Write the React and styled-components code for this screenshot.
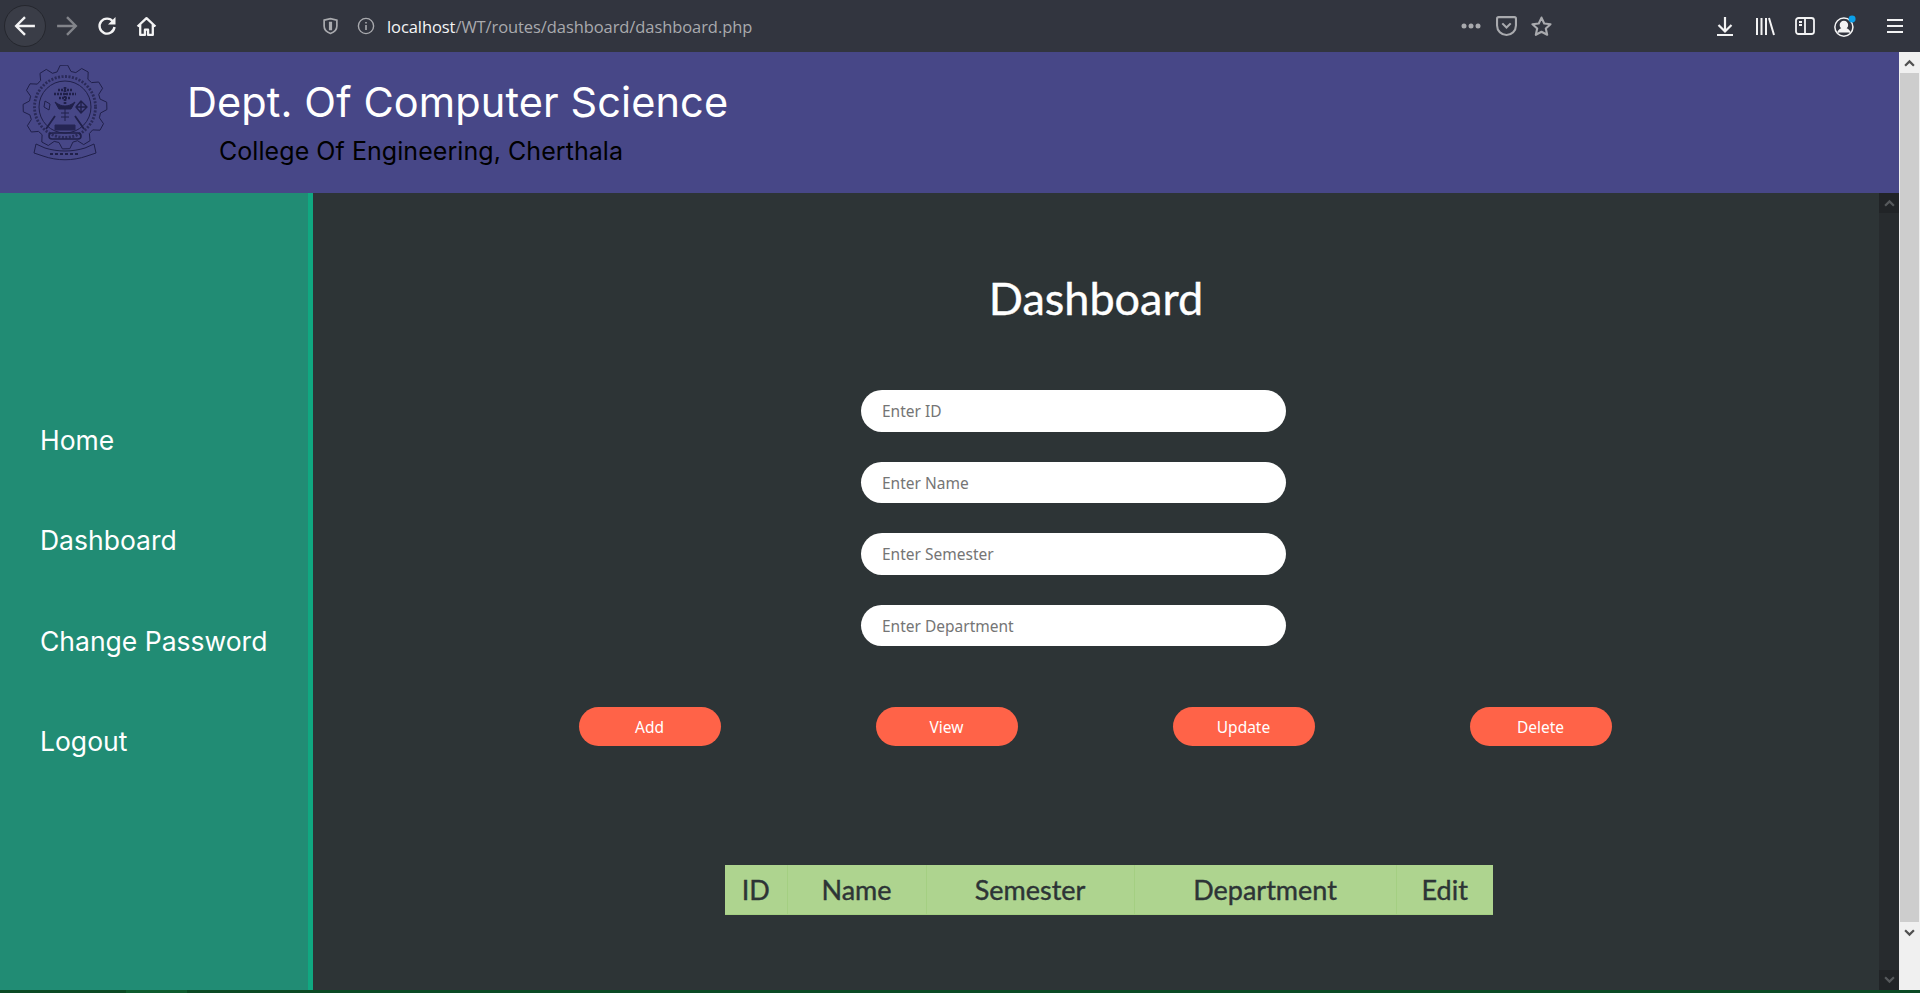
import styled, { createGlobalStyle } from 'styled-components';

const GlobalStyle = createGlobalStyle`
    html, body {
        margin: 0;
        padding: 0;
        height: 100%;
        overflow: hidden;
    }
    * {
        box-sizing: border-box;
    }
`;

const gearPath = () => {
    // gear outline of the college emblem
    const teeth = 12;
    const cx = 44, cy = 42, inner = 36, outer = 42;
    const points = [];
    for (let i = 0; i < teeth; i++) {
        const step = (Math.PI * 2) / teeth;
        const a = i * step;
        [[inner, -0.42], [outer, -0.22], [outer, 0.12], [inner, 0.32]].forEach(([r, f]) => {
            const t = a + f * step;
            points.push(`${(cx + r * Math.cos(t)).toFixed(1)} ${(cy + r * Math.sin(t)).toFixed(1)}`);
        });
    }
    return `M${points.join('L')}Z`;
};

function Emblem() {
    return (
        <LogoSvg viewBox="0 0 88 96" fill="none" stroke="#20204a" strokeWidth="1" strokeLinejoin="round">
            <path d={gearPath()} />
            <circle cx="44" cy="42" r="26" />
            <circle cx="44" cy="42" r="30.500" strokeDasharray="2 1.500" strokeWidth="2.800" opacity="0.75" />
            <path d="M44 22v18M37 25h14M33 29h22M38 33h12" strokeWidth="2.600" strokeDasharray="2 1" />
            <path d="M34 37c4 3 7 4 10 4s6-1 10-4l-4 7H38z" fill="#20204a" />
            <path d="M44 44v12M40 48h8M40 52h8" />
            <path d="M60 36l6 6-6 6-5-6z M60 36v12 M55 42h11" strokeWidth="1.400" />
            <path d="M24 36l5 3-1 6-5-3z" />
            <path d="M25 64l9-13M63 64l-9-13" strokeWidth="1.800" />
            <path d="M34 60h20v5H34z" fill="#20204a" opacity="0.85" />
            <path d="M31 68h26M31 74h26M31 68c-4 0-4 6 0 6M57 68c4 0 4 6 0 6" strokeWidth="1.600" />
            <path d="M15 79l9 4c13 4 27 4 40 0l9-4 2 9-9 3c-14 5-30 5-44 0l-9-3z" />
            <path d="M29 89h30" strokeWidth="2.200" strokeDasharray="3 2" />
        </LogoSvg>
    );
}

const BackIcon = () => (
    <svg width="22" height="22" viewBox="0 0 20 20" fill="none" stroke="currentColor" strokeWidth="2.200">
        <path d="M19 10H2M10 2l-8 8 8 8" />
    </svg>
);

const ReloadIcon = () => (
    <svg width="20" height="20" viewBox="0 0 20 20" fill="none" stroke="currentColor" strokeWidth="2.400">
        <path d="M16 5.500A7.500 7.500 0 1 0 17.500 11" />
        <path d="M18.500 1v7.500H11" fill="currentColor" stroke="none" />
    </svg>
);

const HomeIcon = () => (
    <svg width="21" height="21" viewBox="0 0 20 20" fill="none" stroke="currentColor" strokeWidth="2.200" strokeLinejoin="round">
        <path d="M1.500 10L10 2l8.500 8M4 8v10h4.500v-5h3v5H16V8" />
    </svg>
);

const ShieldIcon = () => (
    <svg width="17" height="18" viewBox="0 0 16 16" fill="none" stroke="currentColor" strokeWidth="1.600">
        <path d="M2 2.500L8 1l6 1.500V8c0 3.500-3 6-6 7-3-1-6-3.500-6-7z" />
        <path d="M8 4v8" strokeWidth="3" />
    </svg>
);

const InfoIcon = () => (
    <svg width="18" height="18" viewBox="0 0 18 18" fill="none" stroke="currentColor" strokeWidth="1.400">
        <circle cx="9" cy="9" r="7.600" />
        <path d="M9 8v5M9 5v1.600" strokeWidth="1.600" />
    </svg>
);

const DotsIcon = () => (
    <svg width="20" height="6" viewBox="0 0 20 6" fill="currentColor">
        <circle cx="3" cy="3" r="2.500" />
        <circle cx="10" cy="3" r="2.500" />
        <circle cx="17" cy="3" r="2.500" />
    </svg>
);

const PocketIcon = () => (
    <svg width="21" height="20" viewBox="0 0 20 19" fill="none" stroke="currentColor" strokeWidth="2">
        <path d="M1 2.500C1 1.700 1.700 1 2.500 1h15c.8 0 1.500.7 1.500 1.500V9a9 9 0 0 1-18 0z" />
        <path d="M6 7l4 4 4-4" />
    </svg>
);

const StarIcon = () => (
    <svg width="21" height="21" viewBox="0 0 20 20" fill="none" stroke="currentColor" strokeWidth="2" strokeLinejoin="round">
        <path d="M10 1.500l2.600 5.600 6 .7-4.500 4.100 1.300 6L10 15l-5.400 2.900 1.300-6L1.400 7.800l6-.7z" />
    </svg>
);

const DownloadIcon = () => (
    <svg width="18" height="20" viewBox="0 0 18 20" fill="none" stroke="currentColor" strokeWidth="2.200">
        <path d="M9 1v14M2.500 9L9 15.500 15.500 9M1 19h16" />
    </svg>
);

const LibraryIcon = () => (
    <svg width="20" height="19" viewBox="0 0 20 19" fill="none" stroke="currentColor" strokeWidth="2">
        <path d="M2 1v17M6.500 1v17M11 1v17M14 1l5 17" />
    </svg>
);

const SidebarIcon = () => (
    <svg width="20" height="18" viewBox="0 0 20 18" fill="none" stroke="currentColor" strokeWidth="1.800">
        <rect x="1" y="1" width="18" height="16" rx="2.500" />
        <path d="M10 1v16M4 5h3M4 8h3" />
    </svg>
);

const AccountIcon = () => (
    <svg width="24" height="24" viewBox="0 0 22 22" fill="none" stroke="currentColor" strokeWidth="1.400">
        <circle cx="10" cy="12" r="8.300" />
        <circle cx="10" cy="10" r="3.200" fill="currentColor" />
        <path d="M4.500 17c1-3 3-3.800 5.500-3.800s4.500.8 5.500 3.800" fill="currentColor" />
        <circle cx="17.500" cy="4.500" r="3.200" fill="#0a9fe8" stroke="none" />
    </svg>
);

const MenuIcon = () => (
    <svg width="16" height="16" viewBox="0 0 16 16" fill="none" stroke="currentColor" strokeWidth="2.200">
        <path d="M0 2h16M0 8h16M0 14h16" />
    </svg>
);

const Chevron = ({ up }) => (
    <svg width="11" height="8" viewBox="0 0 10 7" fill="none" stroke="currentColor" strokeWidth="2">
        <path d={up ? 'M1 6l4-4 4 4' : 'M1 1l4 4 4-4'} />
    </svg>
);

const navItems = ['Home', 'Dashboard', 'Change Password', 'Logout'];
const fields = ['Enter ID', 'Enter Name', 'Enter Semester', 'Enter Department'];
const actions = ['Add', 'View', 'Update', 'Delete'];
const columns = [
    { label: 'ID', width: 62 },
    { label: 'Name', width: 139 },
    { label: 'Semester', width: 208 },
    { label: 'Department', width: 262 },
    { label: 'Edit', width: 97 },
];

export default function App() {
    return (
        <>
            <GlobalStyle />
            <Window>
                <Toolbar>
                    <NavButtons>
                        <BackButton><BackIcon /></BackButton>
                        <ToolIcon $width={41} $dim><BackFlip><BackIcon /></BackFlip></ToolIcon>
                        <ToolIcon $width={40}><ReloadIcon /></ToolIcon>
                        <ToolIcon $width={38}><HomeIcon /></ToolIcon>
                    </NavButtons>
                    <UrlBar>
                        <ToolIcon $width={36} $grey><ShieldIcon /></ToolIcon>
                        <ToolIcon $width={36} $grey><InfoIcon /></ToolIcon>
                        <Url>localhost<UrlPath>/WT/routes/dashboard/dashboard.php</UrlPath></Url>
                    </UrlBar>
                    <PageActions>
                        <ToolIcon $width={36} $grey><DotsIcon /></ToolIcon>
                        <ToolIcon $width={35} $grey><PocketIcon /></ToolIcon>
                        <ToolIcon $width={35} $grey><StarIcon /></ToolIcon>
                    </PageActions>
                    <BrowserActions>
                        <ToolIcon $width={40}><DownloadIcon /></ToolIcon>
                        <ToolIcon $width={40}><LibraryIcon /></ToolIcon>
                        <ToolIcon $width={40}><SidebarIcon /></ToolIcon>
                        <ToolIcon $width={40}><AccountIcon /></ToolIcon>
                        <MenuCell $width={55}><MenuIcon /></MenuCell>
                    </BrowserActions>
                </Toolbar>
                <Viewport>
                    <Page>
                        <Header>
                            <Logo><Emblem /></Logo>
                            <HeaderText>
                                <DeptTitle>Dept. Of Computer Science</DeptTitle>
                                <CollegeName>College Of Engineering, Cherthala</CollegeName>
                            </HeaderText>
                        </Header>
                        <Body>
                            <Sidebar>
                                {navItems.map(item => <NavItem key={item}>{item}</NavItem>)}
                            </Sidebar>
                            <Main>
                                <Title>Dashboard</Title>
                                <Form>
                                    {fields.map(field => <Input key={field} type="text" placeholder={field} />)}
                                </Form>
                                <Buttons>
                                    {actions.map(action => <Button key={action}>{action}</Button>)}
                                </Buttons>
                                <Table>
                                    <thead>
                                        <tr>
                                            {columns.map(col => (
                                                <Th key={col.label} $width={col.width}>{col.label}</Th>
                                            ))}
                                        </tr>
                                    </thead>
                                </Table>
                            </Main>
                            <InnerScrollbar>
                                <InnerArrow><Chevron up /></InnerArrow>
                                <InnerArrow><Chevron /></InnerArrow>
                            </InnerScrollbar>
                        </Body>
                    </Page>
                    <PageScrollbar>
                        <PageArrow><Chevron up /></PageArrow>
                        <Thumb />
                        <PageArrow><Chevron /></PageArrow>
                    </PageScrollbar>
                </Viewport>
                <Taskbar><TaskbarTab /></Taskbar>
            </Window>
        </>
    );
}

const Window = styled.div`
    display: flex;
    flex-direction: column;
    width: 1920px;
    height: 993px;
    overflow: hidden;
`;

const Toolbar = styled.div`
    display: flex;
    align-items: center;
    flex: 0 0 52px;
    background-color: #32353f;
    color: #f3f3f4;
`;

const NavButtons = styled.div`
    display: flex;
    align-items: center;
    flex: 0 0 312px;
    padding-left: 4px;
`;

const BackButton = styled.div`
    display: flex;
    align-items: center;
    justify-content: center;
    width: 42px;
    height: 42px;
    border: 1px solid #25272e;
    border-radius: 50%;
    background-color: #3a3d47;
`;

const BackFlip = styled.span`
    display: flex;
    transform: scaleX(-1);
`;

const ToolIcon = styled.div`
    display: flex;
    align-items: center;
    justify-content: center;
    width: ${props => props.$width}px;
    height: 40px;
    color: ${props => props.$dim ? '#82848a' : props.$grey ? '#a9aaae' : '#f3f3f4'};
`;

const MenuCell = styled(ToolIcon)`
    padding-left: 5px;
`;

const UrlBar = styled.div`
    display: flex;
    align-items: center;
    flex: 0 0 1141px;
`;

const Url = styled.span`
    margin-left: 3px;
    font-family: 'Open Sans', sans-serif;
    font-size: 16.500px;
    color: #f5f5f6;
    letter-spacing: -0.08px;
`;

const UrlPath = styled.span`
    color: #a9aaae;
`;

const PageActions = styled.div`
    display: flex;
    align-items: center;
    flex: 0 0 252px;
`;

const BrowserActions = styled.div`
    display: flex;
    align-items: center;
    flex: 0 0 215px;
`;

const Viewport = styled.div`
    display: flex;
    flex: 1;
    min-height: 0;
`;

const Page = styled.div`
    display: flex;
    flex-direction: column;
    flex: 1;
    min-width: 0;
`;

const Header = styled.header`
    display: flex;
    flex: 0 0 141px;
    background-color: #474787;
`;

const Logo = styled.div`
    flex: 0 0 187px;
    padding: 13px 0 0 21px;
`;

const LogoSvg = styled.svg`
    display: block;
    width: 88px;
    height: 96px;
    filter: blur(0.4px);
`;

const HeaderText = styled.div`
    display: flex;
    flex-direction: column;
    padding-top: 24px;
`;

const DeptTitle = styled.h1`
    margin: 0;
    font-family: 'Inter', sans-serif;
    font-size: 41.500px;
    font-weight: 400;
    line-height: 52px;
    letter-spacing: 0.1px;
    color: #fff;
`;

const CollegeName = styled.h2`
    margin: 7px 0 0 32px;
    font-family: 'Inter', sans-serif;
    font-size: 25px;
    font-weight: 400;
    line-height: 32px;
    letter-spacing: 0.06px;
    color: #000;
`;

const Body = styled.div`
    display: flex;
    flex: 1;
    min-height: 0;
`;

const Sidebar = styled.nav`
    display: flex;
    flex-direction: column;
    justify-content: center;
    flex: 0 0 313px;
    padding: 0 0 2px 40px;
    background-color: #218c74;
    border-right: 5px solid #10a881;
`;

const NavItem = styled.a`
    display: flex;
    align-items: center;
    height: 100.670px;
    font-family: 'Inter', sans-serif;
    font-size: 26.500px;
    color: #fff;
`;

const Main = styled.main`
    display: flex;
    flex-direction: column;
    align-items: center;
    flex: 1;
    min-width: 0;
    padding-top: 73px;
    background-color: #2d3436;
`;

const Title = styled.h2`
    margin: 0;
    font-family: 'Lato', sans-serif;
    font-size: 45px;
    font-weight: 400;
    line-height: 64px;
    -webkit-text-stroke: 0.4px #fff;
    color: #fff;
`;

const Form = styled.div`
    display: flex;
    flex-direction: column;
    gap: 30px;
    width: 425px;
    margin: 60px 45px 0 0;
`;

const Input = styled.input`
    width: 100%;
    height: 41.500px;
    padding: 1px 21px 0;
    border: none;
    border-radius: 21px;
    background-color: #fff;
    font-family: 'Noto Sans', sans-serif;
    font-size: 15.500px;
    outline: none;
    &::placeholder {
        color: #757575;
    }
`;

const Buttons = styled.div`
    display: flex;
    justify-content: space-between;
    width: 1033px;
    margin: 61px 2px 0 0;
`;

const Button = styled.div`
    display: flex;
    align-items: center;
    justify-content: center;
    width: 142px;
    height: 39px;
    border-radius: 20px;
    background-color: #ff6348;
    font-family: 'Noto Sans', sans-serif;
    font-size: 15.500px;
    color: #fff;
    cursor: pointer;
`;

const Table = styled.table`
    width: 768px;
    margin: 119px 0 0 26px;
    border-collapse: collapse;
    table-layout: fixed;
`;

const Th = styled.th`
    width: ${props => props.$width}px;
    height: 49px;
    padding: 0;
    background-color: #aed48f;
    border-right: 1px solid #a4cf82;
    border-bottom: 1px solid #a4cf82;
    font-family: 'Lato', sans-serif;
    font-size: 27px;
    font-weight: 400;
    -webkit-text-stroke: 0.4px #2d3436;
    color: #2d3436;
    &:last-child {
        border-right: none;
    }
`;

const InnerScrollbar = styled.div`
    display: flex;
    flex-direction: column;
    justify-content: space-between;
    flex: 0 0 20px;
    background-color: #272b2e;
`;

const InnerArrow = styled.div`
    display: flex;
    align-items: center;
    justify-content: center;
    height: 20px;
    background-color: #212427;
    color: #56595c;
`;

const PageScrollbar = styled.div`
    display: flex;
    flex-direction: column;
    flex: 0 0 21px;
    background-color: #f0f0f0;
`;

const PageArrow = styled.div`
    display: flex;
    align-items: center;
    justify-content: center;
    flex: 0 0 21px;
    color: #505050;
`;

const Thumb = styled.div`
    flex: 0 0 849px;
    margin: 0 1px;
    background-color: #cdcdcd;
`;

const Taskbar = styled.div`
    flex: 0 0 3px;
    background-color: #0a4a24;
`;

const TaskbarTab = styled.div`
    width: 61px;
    height: 3px;
    margin-left: 126px;
    background-color: #0d5c2e;
`;
